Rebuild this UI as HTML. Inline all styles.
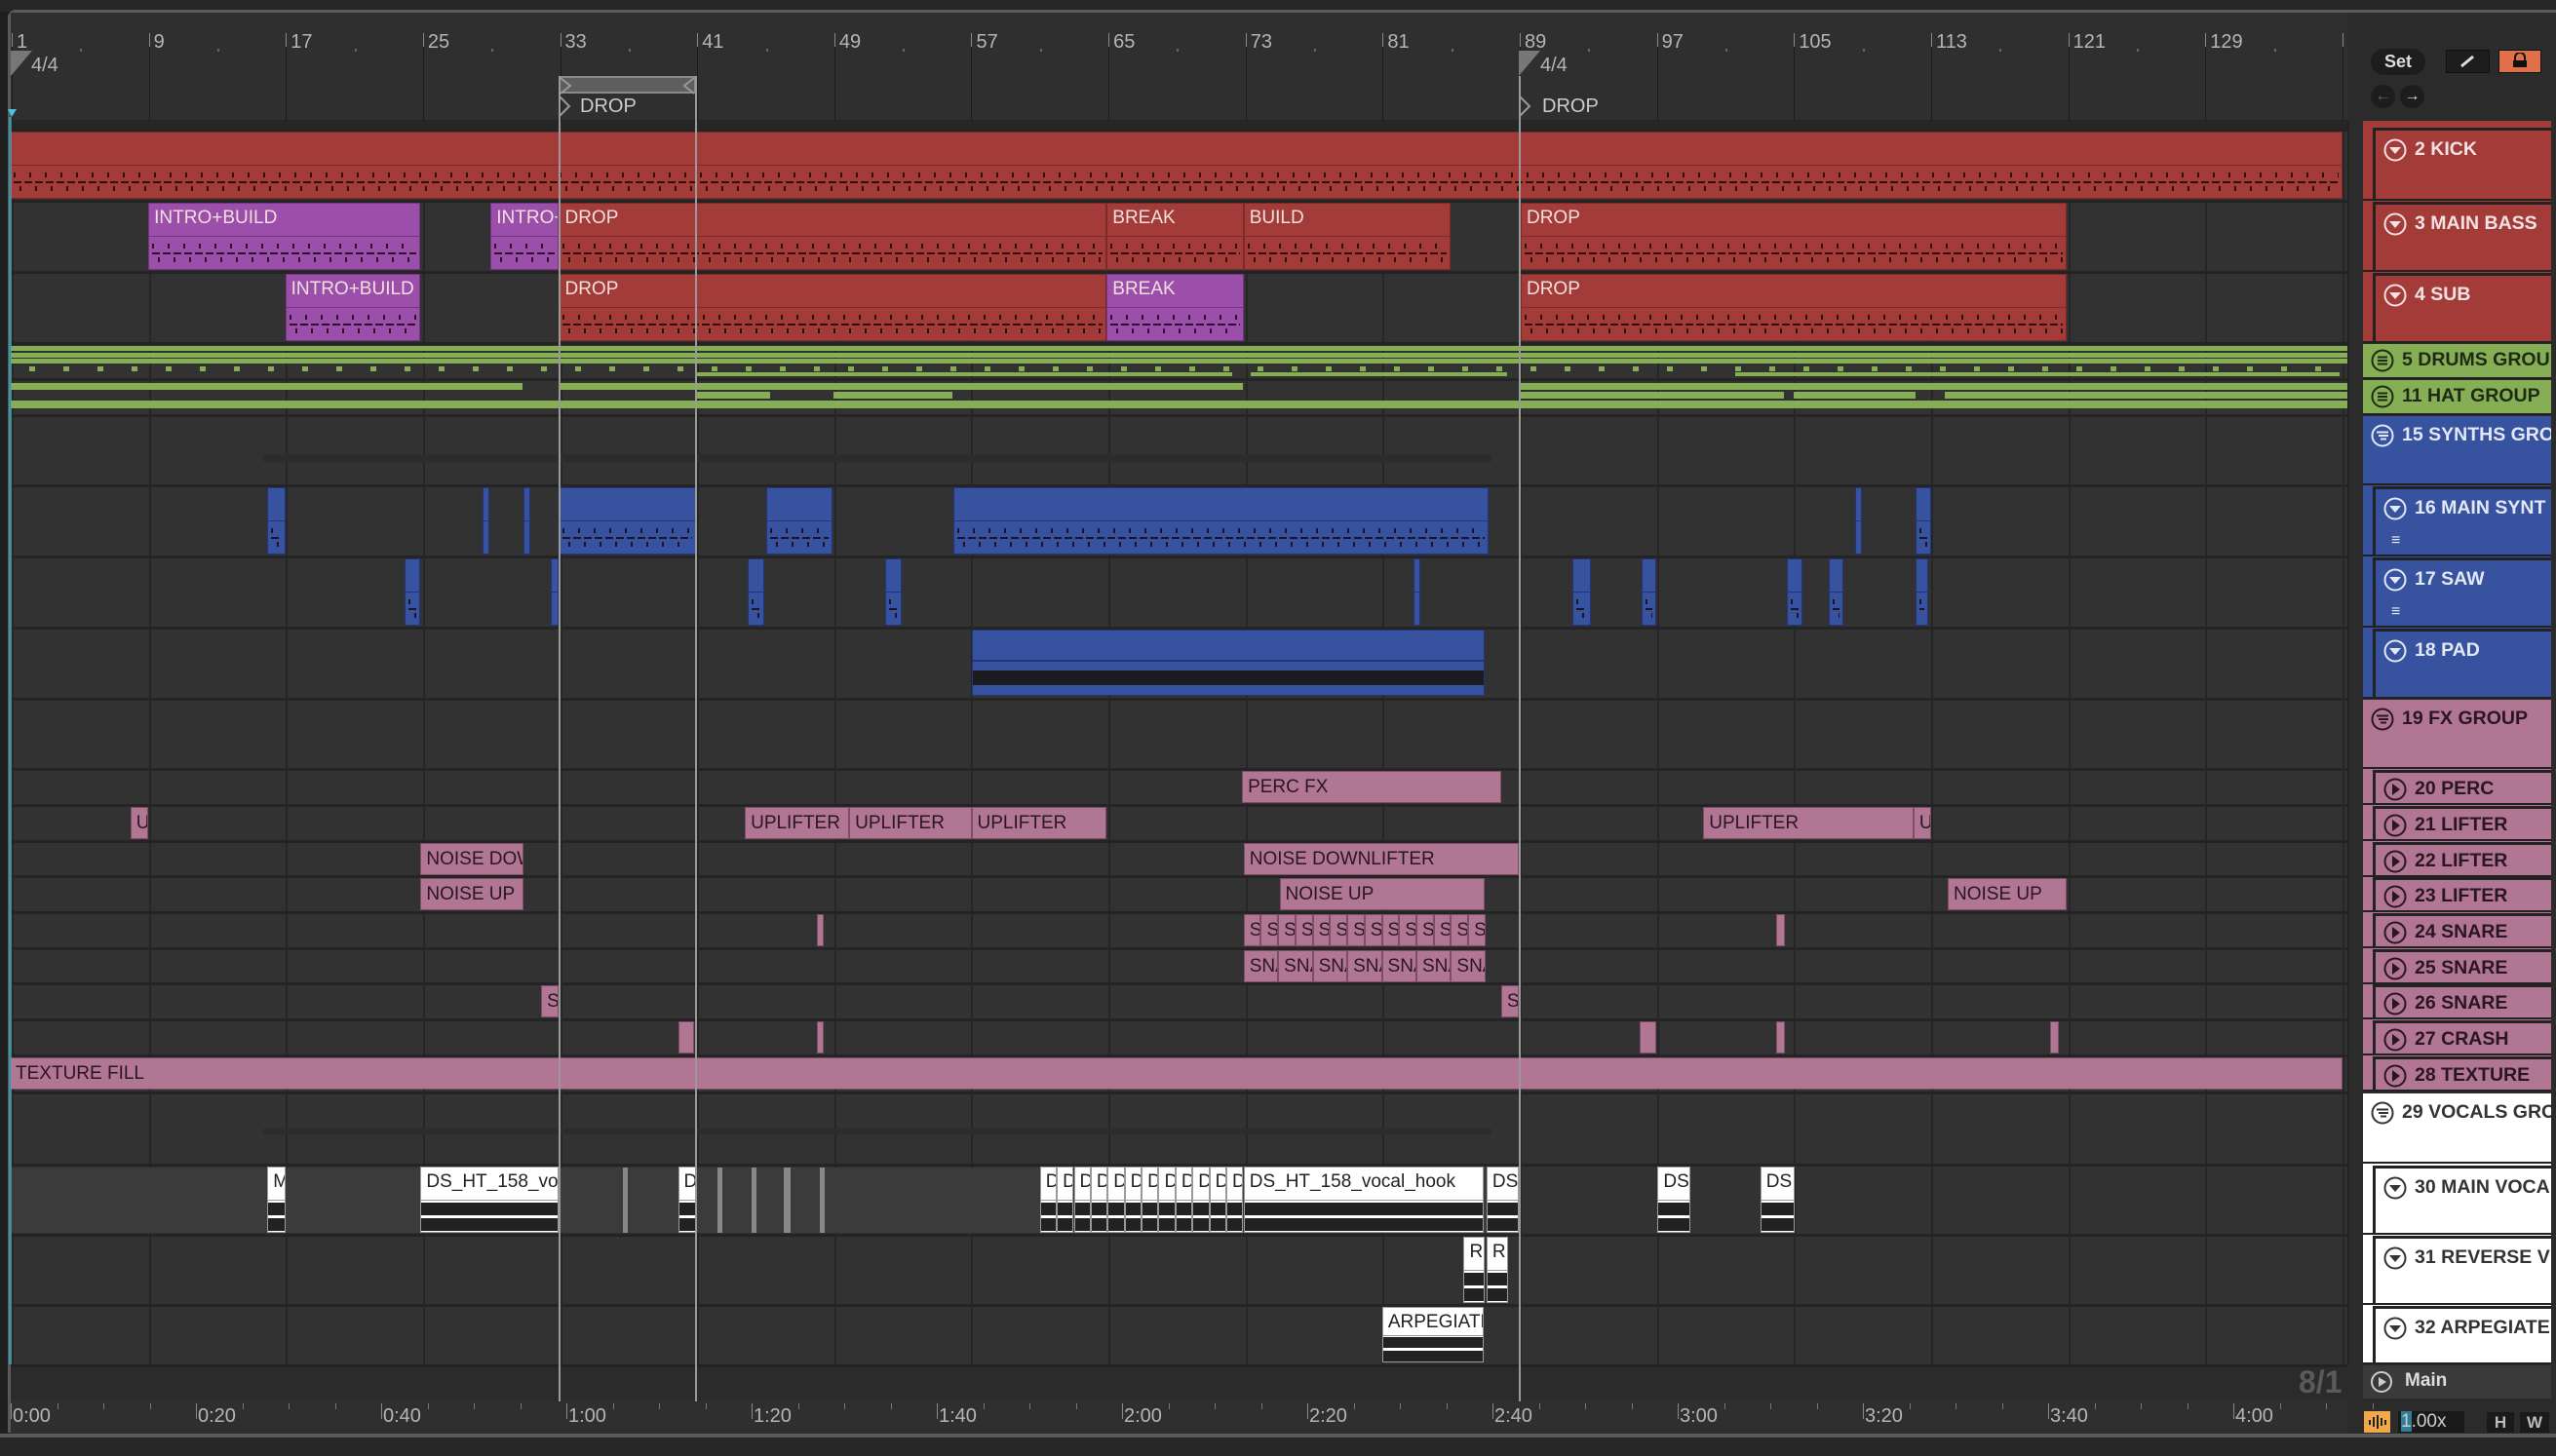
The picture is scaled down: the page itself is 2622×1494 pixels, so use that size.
<!DOCTYPE html>
<html><head><meta charset="utf-8">
<style>
*{margin:0;padding:0;box-sizing:border-box}
body{width:2622px;height:1494px;background:#1f1f1f;position:relative;overflow:hidden;font-family:"Liberation Sans",sans-serif}
.a{position:absolute}
.clip{position:absolute;overflow:hidden;white-space:nowrap;font-size:19px;line-height:30px;padding-left:5px}
.hdr{position:absolute;overflow:hidden;white-space:nowrap;font-weight:bold;font-size:19.5px;letter-spacing:0}
.hdr svg{position:absolute;left:8px;top:8px}
.hdr span{position:absolute;left:40px;top:7px}
.rl{position:absolute;color:#b5b5b5;font-size:20px}
</style></head><body>
<div class="a" style="left:0;top:0;width:2622px;height:12px;background:#262626"></div>
<div class="a" style="left:8px;top:10px;width:2614px;height:1460px;background:#2b2b2b;border-top:3px solid #5a5a5a;border-left:3px solid #5a5a5a;border-radius:8px 0 0 0"></div>
<div class="a" style="left:11px;top:13px;width:2397px;height:110px;background:#2f2f2f"></div>
<div class="a" style="left:11px;top:123px;width:2397px;height:11px;background:#262626"></div>
<div class="a" style="left:11px;top:134px;width:2397px;height:1266px;background:#323232"></div>
<div class="a" style="left:11px;top:1400px;width:2397px;height:36px;background:#2b2b2b;border-top:3px solid #222"></div>
<div class="a" style="left:11px;top:1437px;width:2397px;height:34px;background:#2f2f2f"></div>
<div id="grid"></div>
<div id="rows"></div>
<div id="clips"></div>
<div class="a" style="left:573px;top:78px;width:141px;height:18px;background:#5e5e5e;border:2px solid #8a8a8a"></div>
<svg class="a" style="left:573px;top:78px" width="141" height="20"><path d="M2 2 L12 10 L2 18" fill="none" stroke="#999" stroke-width="2"/><path d="M139 2 L129 10 L139 18" fill="none" stroke="#999" stroke-width="2"/></svg>
<svg class="a" style="left:573px;top:98px" width="20" height="24"><path d="M1 1 L11 11 L1 21" fill="none" stroke="#999" stroke-width="2"/></svg>
<div class="a" style="left:595px;top:98px;color:#ccc;font-size:20px">DROP</div>
<svg class="a" style="left:1558px;top:98px" width="20" height="24"><path d="M1 1 L11 11 L1 21" fill="none" stroke="#999" stroke-width="2"/></svg>
<div class="a" style="left:1582px;top:98px;color:#ccc;font-size:20px">DROP</div>
<svg class="a" style="left:11px;top:52px" width="28" height="28"><path d="M0 0 L22 0 L0 26Z" fill="#777"/></svg>
<div class="a" style="left:32px;top:56px;color:#b5b5b5;font-size:20px">4/4</div>
<svg class="a" style="left:1558px;top:52px" width="28" height="28"><path d="M0 0 L22 0 L0 26Z" fill="#777"/></svg>
<div class="a" style="left:1580px;top:56px;color:#b5b5b5;font-size:20px">4/4</div>
<svg class="a" style="left:8px;top:112px" width="10" height="10"><path d="M0 0 L9 0 L4 8Z" fill="#4cc3dc"/></svg>
<div class="a" style="left:9px;top:120px;width:3px;height:1280px;background:#3ca9c2;opacity:.7"></div>
<div class="a" style="left:573px;top:78px;width:2px;height:1360px;background:#9a9a9a"></div>
<div class="a" style="left:713px;top:78px;width:2px;height:1360px;background:#9a9a9a"></div>
<div class="a" style="left:1558px;top:78px;width:2px;height:1360px;background:#9a9a9a"></div>
<div class="a" style="left:2408px;top:13px;width:214px;height:1460px;background:#2b2b2b"></div>
<div class="a" style="left:2408px;top:124px;width:16px;height:1276px;background:#2c2c2c;border-left:2px solid #222"></div>
<div class="a" style="left:2432px;top:50px;width:56px;height:27px;border-radius:14px;background:#1d1d1d;color:#ddd;font-weight:bold;font-size:18px;text-align:center;line-height:27px">Set</div>
<div class="a" style="left:2509px;top:51px;width:45px;height:24px;background:#1d1d1d;border:1px solid #111"></div>
<svg class="a" style="left:2522px;top:55px" width="18" height="16"><path d="M3 13 L15 3" stroke="#ddd" stroke-width="3"/></svg>
<div class="a" style="left:2563px;top:51px;width:44px;height:24px;background:#e0704a;border:1px solid #111"></div>
<svg class="a" style="left:2576px;top:54px" width="18" height="18"><path d="M4 8 V5 a5 5 0 0 1 10 0 V8" fill="none" stroke="#111" stroke-width="2"/><rect x="2" y="8" width="14" height="7" fill="#111"/></svg>
<div class="a" style="left:2432px;top:87px;width:25px;height:24px;border-radius:12px;background:#1d1d1d;color:#666;font-size:16px;text-align:center;line-height:24px">&#8592;</div>
<div class="a" style="left:2462px;top:87px;width:25px;height:24px;border-radius:12px;background:#1d1d1d;color:#ddd;font-size:16px;text-align:center;line-height:24px;font-weight:bold">&#8594;</div>
<div id="hdrs"></div>
<div class="a" style="left:2358px;top:1400px;color:#5a5a5a;font-size:32px;font-weight:bold">8/1</div>
<div class="a" style="left:2424px;top:1401px;width:193px;height:34px;background:#3a3a3a"></div>
<svg class="a" style="left:2431px;top:1406px" width="24" height="24"><circle cx="12" cy="12" r="10" fill="none" stroke="#ccc" stroke-width="2"/><path d="M9 7 L17 12 L9 17Z" fill="#ccc"/></svg>
<div class="a" style="left:2467px;top:1406px;color:#ddd;font-weight:bold;font-size:19px">Main</div>
<div id="tr"></div>
<div class="a" style="left:0;top:1471px;width:2622px;height:4px;background:#5a5a5a"></div>
<div class="a" style="left:0;top:1475px;width:2622px;height:19px;background:#262626"></div>
<div class="a" style="left:2425px;top:1448px;width:27px;height:22px;background:#f0a848"></div>
<svg class="a" style="left:2425px;top:1448px" width="27" height="22"><path d="M6 9v5M10 6v10M14 4v14M18 7v8M22 9v5" stroke="#222" stroke-width="2"/></svg>
<div class="a" style="left:2460px;top:1448px;width:68px;height:22px;background:#1a1a1a;color:#ccc;font-size:19px;line-height:22px;padding-left:3px"><span style="background:#2e7f96">1</span>.00x</div>
<div class="a" style="left:2551px;top:1449px;width:28px;height:21px;background:#1a1a1a;color:#bbb;font-size:17px;font-weight:bold;text-align:center;line-height:21px">H</div>
<div class="a" style="left:2585px;top:1449px;width:30px;height:21px;background:#1a1a1a;color:#bbb;font-size:17px;font-weight:bold;text-align:center;line-height:21px">W</div>
<script>
const S=1.672;
let h='';
function bx(b){return 12+(b-1)*17.58}
for(let b=1;b<=137;b+=8){const x=bx(b);
 h+=`<div class="a" style="left:${x}px;top:134px;width:2px;height:1266px;background:#262626"></div>`;
 h+=`<div class="a" style="left:${x}px;top:40px;width:1px;height:84px;background:#1c1c1c"></div>`;
 h+=`<div class="a" style="left:${x}px;top:34px;width:1px;height:14px;background:#888"></div>`;
 if(b<=129)h+=`<div class="rl" style="left:${x+5}px;top:32px">${b}</div>`;
 h+=`<div class="a" style="left:${bx(b+4)}px;top:50px;width:2px;height:3px;background:#666"></div>`;
}
document.getElementById('grid').innerHTML=h;
let t2='';
const tl=['0:00','0:20','0:40','1:00','1:20','1:40','2:00','2:20','2:40','3:00','3:20','3:40','4:00'];
tl.forEach((t,i)=>{const x=13+i*190;t2+=`<div class="rl" style="left:${x}px;top:1442px">${t}</div><div class="a" style="left:${x-2}px;top:1440px;width:1px;height:16px;background:#888"></div>`;
 for(let k=1;k<4;k++)t2+=`<div class="a" style="left:${x-2+k*47.5}px;top:1440px;width:1px;height:6px;background:#777"></div>`;});
document.getElementById('tr').innerHTML=t2;
const rows=[[134,72],[207,72],[280,72],[353,36],[390,36],[427,71],[499,72],[572,72],[645,72],[718,71],[790,36],[827,36],[864,36],[900,36],[937,36],[974,36],[1010,36],[1047,36],[1084,36],[1122,72],[1196,71],[1268,71],[1340,60]];
let r='';
r+=`<div class="a" style="left:11px;top:1198px;width:1547px;height:67px;background:#3b3b3b"></div>`;
rows.forEach(([t,hh])=>{r+=`<div class="a" style="left:11px;top:${t-2}px;width:2397px;height:3px;background:#242424"></div>`});
r+=`<div class="a" style="left:270px;top:466px;width:1260px;height:8px;background:#2c2c2c"></div>`;
r+=`<div class="a" style="left:270px;top:1158px;width:1260px;height:6px;background:#2c2c2c"></div>`;
document.getElementById('rows').innerHTML=r;
const C={r:'#a33c38',p:'#9b4fab',g:'#86ae55',b:'#3753a0',k:'#b07694',w:'#ffffff'};
const D={r:'#7c2a27',p:'#74347f',b:'#22357a',k:'#7e4e67',w:'#999'};
let c='';
function big(ri,x1,x2,col,lab){const [t,hh]=rows[ri];const L=x1*S,W=(x2-x1)*S;
 const tc=col=='w'?'#222':(col=='k'?'#2a1620':'#f3dede');
 let inner='';
 if(col=='w'){inner=`<div class="a" style="left:0;right:0;top:${hh*0.5}px;height:${hh*0.42}px;background:#222"></div><div class="a" style="left:0;right:0;top:${hh*0.69}px;height:3px;background:#fff"></div>`;}
 else{const dk='rgba(25,8,12,.85)';
  inner=`<div class="a" style="left:3px;right:3px;top:${hh*0.57}px;height:5px;background:repeating-linear-gradient(90deg,${dk} 0 2px,transparent 2px 16px)"></div>
  <div class="a" style="left:3px;right:3px;top:${hh*0.69}px;height:2px;background:repeating-linear-gradient(90deg,${dk} 0 8px,transparent 8px 11px)"></div>
  <div class="a" style="left:9px;right:3px;top:${hh*0.77}px;height:5px;background:repeating-linear-gradient(90deg,${dk} 0 2px,transparent 2px 16px)"></div>`;}
 c+=`<div class="clip" style="left:${L}px;top:${t+1}px;width:${W}px;height:${hh-3}px;background:${C[col]};border:1px solid ${D[col]};color:${tc}">${lab}
 <div class="a" style="left:0;right:0;top:${hh*0.46}px;height:1px;background:${D[col]}"></div>${inner}</div>`;}
function sm(ri,x1,x2,col,lab){const [t,hh]=rows[ri];c+=`<div class="clip" style="left:${x1*S}px;top:${t+1}px;width:${(x2-x1)*S}px;height:${hh-3}px;background:${C[col]};border:1px solid ${D[col]};color:#2a1620;line-height:${hh-4}px">${lab||''}</div>`;}
big(0,6,1437,'r','');
big(1,91,258,'p','INTRO+BUILD');big(1,301,343,'p','INTRO+');big(1,343,679,'r','DROP');big(1,679,763,'r','BREAK');big(1,763,890,'r','BUILD');big(1,933,1268,'r','DROP');
big(2,175,258,'p','INTRO+BUILD');big(2,343,679,'r','DROP');big(2,679,763,'p','BREAK');big(2,933,1268,'r','DROP');
[[355,5],[362,5],[368,5]].forEach(([y,hh])=>c+=`<div class="a" style="left:11px;top:${y}px;width:2397px;height:${hh}px;background:${C.g}"></div>`);
for(let x=30;x<2400;x+=35)c+=`<div class="a" style="left:${x}px;top:376px;width:6px;height:5px;background:${C.g}"></div>`;
[[714,1264],[1283,1546],[1780,2400]].forEach(([a,b])=>c+=`<div class="a" style="left:${a}px;top:382px;width:${b-a}px;height:4px;background:${C.g}"></div>`);
[[11,536],[573,1275],[1558,2408]].forEach(([a,b])=>c+=`<div class="a" style="left:${a}px;top:393px;width:${b-a}px;height:7px;background:${C.g}"></div>`);
[[714,790],[855,977],[1558,1830],[1840,1965],[1995,2408]].forEach(([a,b])=>c+=`<div class="a" style="left:${a}px;top:402px;width:${b-a}px;height:7px;background:${C.g}"></div>`);
c+=`<div class="a" style="left:11px;top:411px;width:2397px;height:8px;background:${C.g}"></div>`;
[[164,175],[296,300],[321,325],[343,427],[470,511],[585,913],[1138,1142],[1175,1185]].forEach(([a,b])=>big(6,a,b,'b',''));
[[248,258],[338,343],[459,469],[543,553],[867,869],[965,976],[1007,1016],[1096,1106],[1122,1131],[1175,1183]].forEach(([a,b])=>big(7,a,b,'b',''));
c+=`<div class="clip" style="left:${596*S}px;top:646px;width:${315*S}px;height:68px;background:${C.b};border:1px solid ${D.b}"><div class="a" style="left:0;right:0;top:30px;height:2px;background:${D.b}"></div><div class="a" style="left:0;right:0;top:41px;height:15px;background:#1b1c22"></div></div>`;
sm(10,762,921,'k','PERC FX');
sm(11,80,91,'k','U');sm(11,457,521,'k','UPLIFTER');sm(11,521,596,'k','UPLIFTER');sm(11,596,679,'k','UPLIFTER');sm(11,1045,1174,'k','UPLIFTER');sm(11,1174,1185,'k','U');
sm(12,258,321,'k','NOISE DOW');sm(12,763,932,'k','NOISE DOWNLIFTER');
sm(13,258,321,'k','NOISE UP');sm(13,785,911,'k','NOISE UP');sm(13,1195,1268,'k','NOISE UP');
sm(14,501,505,'k');for(let i=0;i<14;i++)sm(14,763+i*10.6,763+(i+1)*10.6,'k','S');sm(14,1090,1095,'k');
for(let i=0;i<7;i++)sm(15,763+i*21.2,763+(i+1)*21.2,'k','SNA');
sm(16,332,343,'k','S');sm(16,921,932,'k','S');
sm(17,416,426,'k');sm(17,501,505,'k');sm(17,1006,1016,'k');sm(17,1090,1095,'k');sm(17,1258,1263,'k');
sm(18,6,1437,'k','TEXTURE FILL');
big(20,164,175,'w','M');big(20,258,343,'w','DS_HT_158_vo');
[[382,385],[440,443],[461,464],[481,485],[503,506]].forEach(([a,b])=>c+=`<div class="a" style="left:${a*S}px;top:1198px;width:${(b-a)*S}px;height:67px;background:#888"></div>`);
big(20,416,427,'w','D');
for(let i=0;i<12;i++)big(20,638+i*10.4,638+(i+1)*10.4,'w','D');
big(20,763,910,'w','DS_HT_158_vocal_hook');big(20,912,932,'w','DS');big(20,1017,1037,'w','DS');big(20,1080,1101,'w','DS');
big(21,898,911,'w','R');big(21,912,925,'w','RE');
big(22,848,910,'w','ARPEGIATE');
document.getElementById('clips').innerHTML=c;
const H=[[0,'2 KICK','r','t',1],[1,'3 MAIN BASS','r','t',1],[2,'4 SUB','r','t',1],[3,'5 DRUMS GROU','g','g',0],[4,'11 HAT GROUP','g','g',0],[5,'15 SYNTHS GRO','b','G',0],[6,'16 MAIN SYNT','b','t',1],[7,'17 SAW','b','t',1],[8,'18 PAD','b','t',1],[9,'19 FX GROUP','k','G',0],
[10,'20 PERC','k','p',1],[11,'21 LIFTER','k','p',1],[12,'22 LIFTER','k','p',1],[13,'23 LIFTER','k','p',1],[14,'24 SNARE','k','p',1],[15,'25 SNARE','k','p',1],[16,'26 SNARE','k','p',1],[17,'27 CRASH','k','p',1],[18,'28 TEXTURE','k','p',1],[19,'29 VOCALS GRO','w','G',0],[20,'30 MAIN VOCA','w','t',1],[21,'31 REVERSE V','w','t',1],[22,'32 ARPEGIATE','w','t',1]];
let hd='';
hd+=`<div class="a" style="left:2424px;top:124px;width:193px;height:228px;background:${C.r}"></div>`;
hd+=`<div class="a" style="left:2424px;top:427px;width:193px;height:290px;background:${C.b}"></div>`;
hd+=`<div class="a" style="left:2424px;top:718px;width:193px;height:402px;background:${C.k}"></div>`;
hd+=`<div class="a" style="left:2424px;top:1122px;width:193px;height:277px;background:#fff"></div>`;
H.forEach(([ri,lab,col,ic,ind])=>{let [t,hh]=rows[ri];if(ri==0){t=131;hh=75}
 const sh=hh<40;
 const tc={r:'#f4e2e2',g:'#1f2a14',b:'#e3e8f6',k:'#2a1620',w:'#333'}[col];
 const L=ind?2434:2424;
 let icon='';
 if(ic=='t')icon=`<circle cx="12" cy="12" r="10.5" fill="none" stroke="${tc}" stroke-width="2"/><path d="M6 9 L18 9 L12 16Z" fill="${tc}"/>`;
 else if(ic=='p')icon=`<circle cx="12" cy="12" r="10.5" fill="none" stroke="${tc}" stroke-width="2"/><path d="M9 6 L17 12 L9 18Z" fill="${tc}"/>`;
 else if(ic=='g')icon=`<circle cx="12" cy="12" r="10.5" fill="none" stroke="${tc}" stroke-width="2"/><path d="M7 8.5h10M7 12h10M7 15.5h10" stroke="${tc}" stroke-width="2"/>`;
 else icon=`<circle cx="12" cy="12" r="10.5" fill="none" stroke="${tc}" stroke-width="2"/><path d="M6 8.5h12M8 12h10M10 15.5h6" stroke="${tc}" stroke-width="2"/>`;
 const ty=sh?5:8;
 hd+=`<div class="hdr" style="left:${L}px;top:${t}px;width:${2617-L}px;height:${hh-1}px;background:${C[col]};color:${tc};${ind?'border-left:3px solid #222;border-top:3px solid #222':''}"><svg width="24" height="24" style="top:${ty}px">${icon}</svg><span style="top:${ty}px">${lab}</span>${(ri==6||ri==7)?`<div class="a" style="left:16px;top:44px;font-size:16px">&#8801;</div>`:''}</div>`;
 hd+=`<div class="a" style="left:2424px;top:${t+hh-2}px;width:193px;height:2px;background:#222"></div>`;
});
document.getElementById('hdrs').innerHTML=hd;
</script>
</body></html>
